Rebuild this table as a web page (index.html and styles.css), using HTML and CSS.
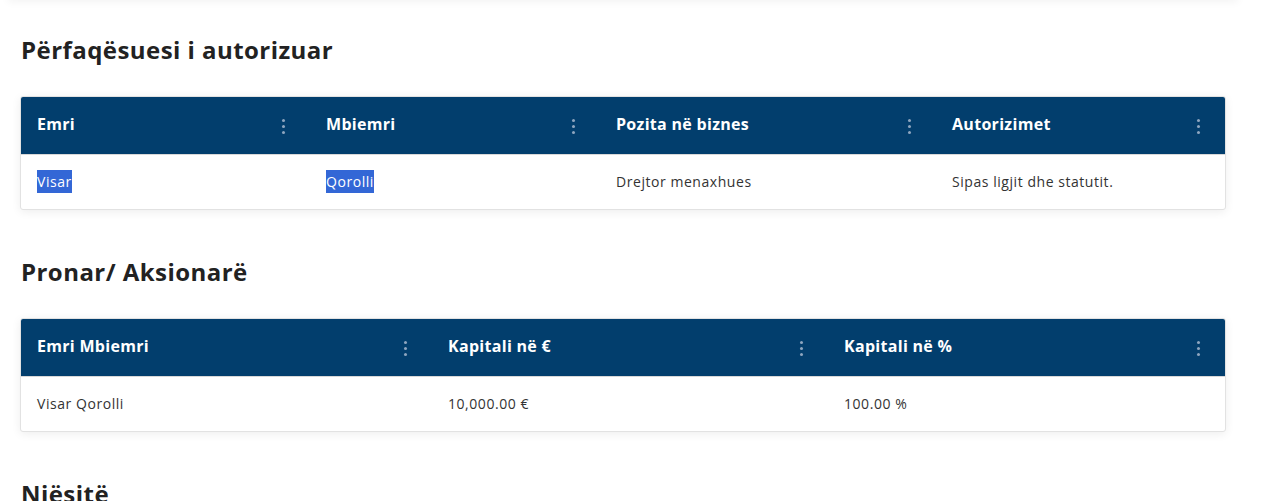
FILE: index.html
```html
<!DOCTYPE html>
<html lang="sq">
<head>
<meta charset="utf-8">
<link rel="stylesheet" href="styles.css">
</head>
<body>
<div class="page">
  <div class="prev-card"></div>

  <section class="block">
    <h2 class="title">Përfaqësuesi i autorizuar</h2>
    <div class="card">
      <div class="row head cols-a">
        <div class="cell">Emri<span class="dots"><i></i><i></i><i></i></span></div>
        <div class="cell">Mbiemri<span class="dots"><i></i><i></i><i></i></span></div>
        <div class="cell">Pozita në biznes<span class="dots"><i></i><i></i><i></i></span></div>
        <div class="cell">Autorizimet<span class="dots"><i></i><i></i><i></i></span></div>
      </div>
      <div class="row body cols-a">
        <div class="cell"><span class="sel">Visar</span></div>
        <div class="cell"><span class="sel">Qorolli</span></div>
        <div class="cell">Drejtor menaxhues</div>
        <div class="cell">Sipas ligjit dhe statutit.</div>
      </div>
    </div>
  </section>

  <section class="block">
    <h2 class="title">Pronar/ Aksionarë</h2>
    <div class="card">
      <div class="row head cols-b">
        <div class="cell">Emri Mbiemri<span class="dots"><i></i><i></i><i></i></span></div>
        <div class="cell">Kapitali në €<span class="dots"><i></i><i></i><i></i></span></div>
        <div class="cell">Kapitali në %<span class="dots"><i></i><i></i><i></i></span></div>
      </div>
      <div class="row body cols-b">
        <div class="cell">Visar Qorolli</div>
        <div class="cell">10,000.00 €</div>
        <div class="cell">100.00 %</div>
      </div>
    </div>
  </section>

  <section class="block">
    <h2 class="title">Njësitë</h2>
  </section>
</div>
</body>
</html>
```

FILE: styles.css
```css
html, body {
  margin: 0;
  padding: 0;
  background: #ffffff;
}

body {
  font-family: "Open Sans", "Noto Sans", "Liberation Sans", sans-serif;
  color: #333333;
  overflow: hidden;
}

.page {
  padding: 0 50px 0 20px;
}

.prev-card {
  height: 10px;
  margin: -10px -12px 0 -12px;
  background: #ffffff;
  box-shadow: 0 2px 8px rgba(0, 0, 0, 0.05);
}

.block {
  padding-top: 29px;
}

.title {
  margin: 0 0 0 1px;
  font-size: 24px;
  line-height: 42px;
  font-weight: 700;
  color: #222222;
  letter-spacing: 0.45px;
}

.card {
  margin-top: 25px;
  margin-bottom: 12px;
  border: 1px solid #e2e2e2;
  border-radius: 3px;
  background: #ffffff;
  box-shadow: 0 2px 10px rgba(0, 0, 0, 0.07);
  overflow: hidden;
}

.row {
  display: grid;
}

.cols-a {
  grid-template-columns: 289px 290px 336px 1fr;
}

.cols-b {
  grid-template-columns: 411px 396px 1fr;
}

.head {
  height: 57px;
  background: #023e6d;
  color: #ffffff;
  font-weight: 700;
  font-size: 16px;
  letter-spacing: 0.3px;
  border-bottom: 1px solid #d8d8d8;
}

.body {
  height: 54px;
  font-size: 14px;
  letter-spacing: 0.55px;
  color: #333333;
}

.cell {
  display: flex;
  align-items: center;
  justify-content: space-between;
  padding: 0 25px 0 16px;
}

.head .cell {
  padding-bottom: 3px;
}

.body .cell {
  padding-bottom: 1px;
}

.dots {
  display: flex;
  flex-direction: column;
  gap: 3px;
  margin-top: 4px;
}

.dots i {
  display: block;
  width: 3px;
  height: 3px;
  border-radius: 50%;
  background: #8ea6bf;
}

.sel {
  background: #3367d6;
  color: #ffffff;
  line-height: 23px;
}
```
